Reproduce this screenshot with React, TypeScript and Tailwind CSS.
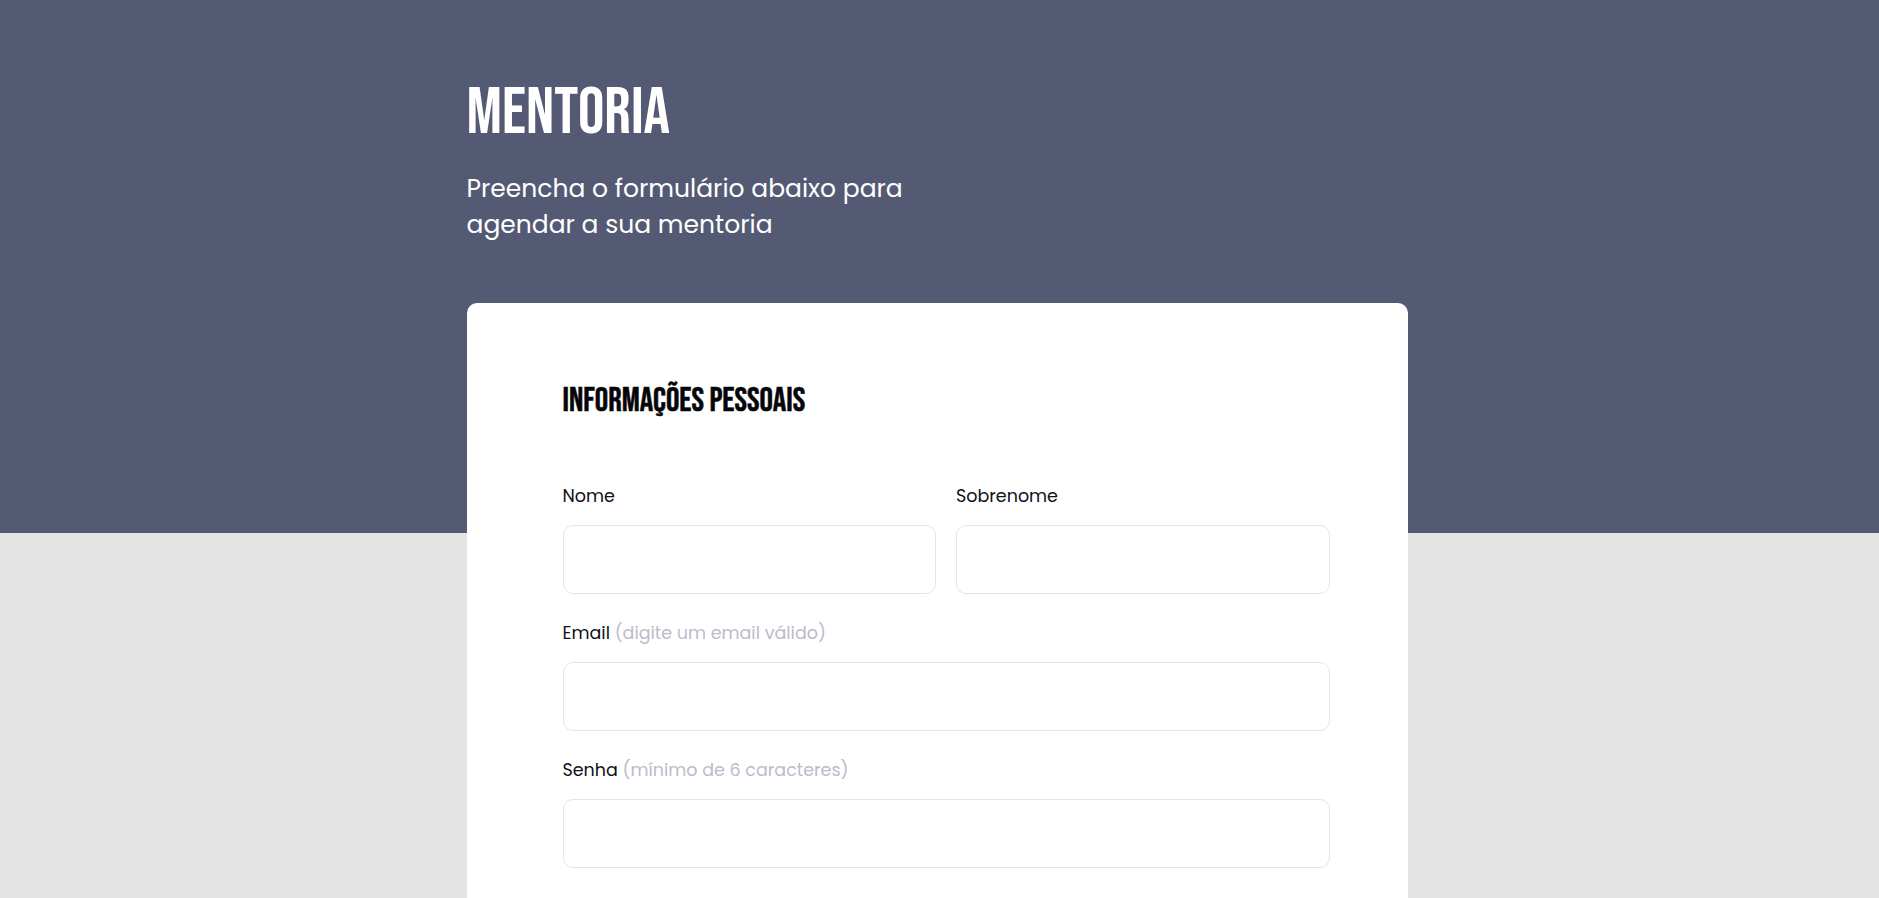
import React from "react";

const display = {
  fontFamily: '"Bebas Neue", "Liberation Sans Narrow", "DejaVu Sans Condensed", sans-serif',
};
const body = { fontFamily: '"Poppins", "Inter", "Liberation Sans", sans-serif' };

function Field({ label, hint }: { label: string; hint?: string }) {
  return (
    <div className="flex flex-col">
      <label className="text-[17.5px] leading-[26px] text-[#0f0f1a] mb-[16px]" style={body}>
        {label}
        {hint && <span className="text-[#bcbbcc]"> {hint}</span>}
      </label>
      <input className="h-[69px] w-full rounded-[10px] border border-[#e5e3ef] bg-white px-4 outline-none" />
    </div>
  );
}

export default function App() {
  return (
    <div className="min-h-screen w-full bg-[linear-gradient(to_bottom,#545a73_0,#545a73_533px,#e4e4e4_533px)] pr-[5px]">
      <div className="mx-auto w-[941px] pt-[81px]">
        <h1 className="text-[66px] leading-[66px] uppercase text-white" style={display}>
          Mentoria
        </h1>
        <p className="mt-[24px] w-[470px] text-[25px] leading-[36px] text-white" style={body}>
          Preencha o formulário abaixo para agendar a sua mentoria
        </p>
        <div className="mt-[60px] rounded-[10px] bg-white pl-[96px] pt-[81px] pb-[120px]">
          <h2
            className="text-[33.5px] leading-[34px] uppercase text-[#05050a] [-webkit-text-stroke:0.5px_#05050a]"
            style={display}
          >
            Informações pessoais
          </h2>
          <div className="mt-[65px] flex w-[767px] flex-col gap-[26px]">
            <div className="grid grid-cols-2 gap-[20px]">
              <Field label="Nome" />
              <Field label="Sobrenome" />
            </div>
            <Field label="Email" hint="(digite um email válido)" />
            <Field label="Senha" hint="(mínimo de 6 caracteres)" />
          </div>
        </div>
      </div>
    </div>
  );
}
